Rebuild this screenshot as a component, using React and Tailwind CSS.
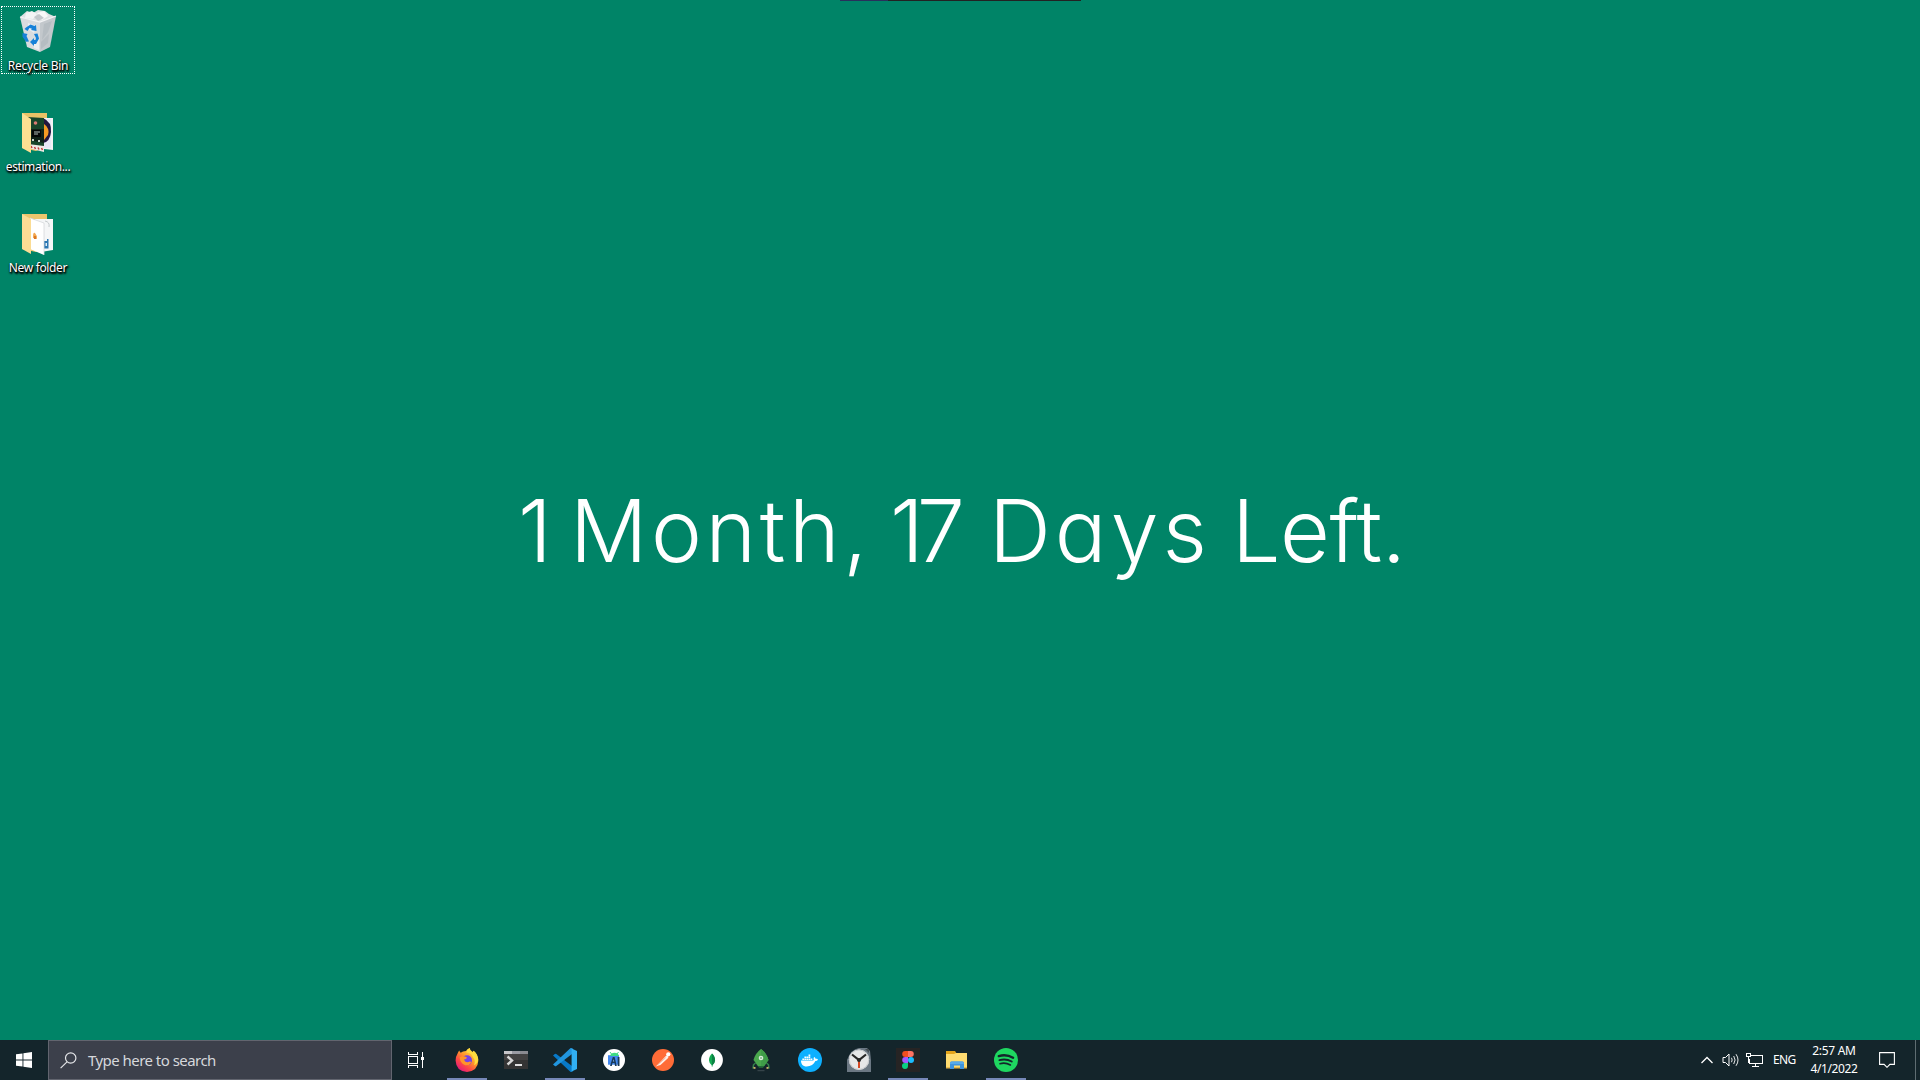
import React from "react";
import { FaDocker } from "react-icons/fa";

function RecycleBin() {
  return (
    <svg viewBox="0 0 48 48" className="mt-px h-12 w-12 shrink-0">
      <path d="M6 9 L13 3 L19 5 L24 2 L31 3 L35 6 L42 9 L24 17Z" fill="#dfe2e4" />
      <path d="M12 5l6-2 5 3-4 5-8-1z" fill="#f3f4f5" />
      <path d="M23 5l7-2 4 5-6 4z" fill="#f8f8f8" />
      <path d="M20 9l5-3 5 4-6 3z" fill="#c3c8cc" />
      <path d="M6 9l20 5 0 30-13-5z" fill="#d9dcdf" />
      <path d="M26 14l16-6-6 31-10 5z" fill="#c3c8cc" />
      <path d="M30 16l8-3-4 11-6 8zM27 34l8-8-1 9-7 6z" fill="#aeb5ba" opacity=".6" />
      <path d="M14 15l8 3-2 7-6-4zM20 35l5-3v10l-5-2z" fill="#eceef0" />
      <path d="M6 9l20 5 16-6" fill="none" stroke="#f2f3f4" strokeWidth="1.2" />
      <g fill="#1681d8">
        <path d="M12 19.500l4.500-3 4 1.500 1.500-1 .5 6-5.500-1 1-1.200-2.500-.8-2 3-3-2z" />
        <path d="M8.500 25l5 1-1 2 2.500 5.500-3 .2-3.500-5z" />
        <path d="M20 26l3.500-.5 1.500 5-3 5.500h-2l0 2-4-4 4-4v2h1.500l.5-2z" />
      </g>
    </svg>
  );
}

function CardsFolder() {
  return (
    <svg viewBox="0 0 48 48" className="mt-px h-12 w-12 shrink-0">
      <path d="M8 4h25v33l-11 5-14-3z" fill="#e9c267" />
      <path d="M20 9h19v32l-17-2z" fill="#f3f3f5" />
      <path d="M27 10h10v29h-10z" fill="#e8e8f6" />
      <path d="M29 9q9 4 8 14t-8 11z" fill="#23163f" />
      <path d="M30 15q6 4 4 11l-4 5z" fill="#f59a23" />
      <path d="M13 8l17 1 0 33-17-5z" fill="#18452a" />
      <path d="M15 20l15 0v14l-15-3z" fill="#102118" />
      <path d="M18 21h9v7h-9z" fill="#050708" />
      <path d="M20 23h6M20 25h4" stroke="#b5bfba" strokeWidth="1" />
      <circle cx="21.500" cy="14" r="1.800" fill="#db7b73" />
      <path d="M18 31h2M24 32h2" stroke="#c7d0c8" strokeWidth="2" />
      <path d="M14 35l16 2v6l-16-4z" fill="#efe9e4" />
      <path d="M17 37l1 2M20.500 38l1 2M24 38.500l1 2M27.500 39l1 2" stroke="#c33939" strokeWidth="1.500" />
      <path d="M8 4l9 6v34l-9-5z" fill="#fbdf92" />
    </svg>
  );
}

function PapersFolder() {
  return (
    <svg viewBox="0 0 48 48" className="mt-px h-12 w-12 shrink-0">
      <path d="M8 4h25v33l-11 5-14-3z" fill="#ecc56d" />
      <path d="M21 9h18v31l-12 2z" fill="#f5f6f7" />
      <path d="M31 11q5 1 4 6" fill="none" stroke="#c5cacc" />
      <path d="M30 31h3v-2h1.500v9.500H30z" fill="#2d78b3" />
      <path d="M31.500 33h1.500v3h-1.500z" fill="#e4eff8" />
      <path d="M16 8l14 5v32l-14-6z" fill="#fff" />
      <path d="M16 8l14 5v32" fill="none" stroke="#d5d8da" strokeWidth=".8" />
      <path d="M19 27q0-5 2-4 2 2 2 6l-4-1z" fill="#f3a64e" />
      <path d="M20 26h2v3h-2z" fill="#d97826" />
      <path d="M8 4l9 5v35l-9-5z" fill="#fbdc94" />
    </svg>
  );
}

const icon = "h-6 w-6";

function Firefox() {
  return (
    <svg viewBox="0 0 24 24" className={icon}>
      <defs>
        <linearGradient id="ff" x1=".85" y1=".1" x2=".2" y2=".95">
          <stop offset="0" stopColor="#ffe14a" />
          <stop offset=".4" stopColor="#ff9a2a" />
          <stop offset=".7" stopColor="#ff4a43" />
          <stop offset="1" stopColor="#e4187d" />
        </linearGradient>
      </defs>
      <path d="M2.600 5.500Q3.200 3.600 4.400 2.500q.2 1.500 1.300 2.300 2-1.800 5.300-1.900Q12.200.9 14.600 0q.5 2.700 3 4.100l1-1.300q4.800 4 4.700 10-.5 10.300-11.300 11.200Q1 23.400.6 12.600.6 8.500 2.600 5.500z" fill="url(#ff)" />
      <path d="M14.600 0q-3.100 1.600-3.200 4.600 4.800 0 6.600 4.600 3 3.500 1 8 3.700-1.800 4.200-5.500Q22.600 6.300 18.600 2.800l-.5 2Q14.900 3.500 14.600 0z" fill="#ffdc3e" />
      <circle cx="12" cy="12.300" r="5" fill="#7542e5" />
      <path d="M4.700 9.300q3.500-2.200 7.300.2-.4 1.800-3 2 .7 3.200 4.400 2.500 2-.9 3 .2-2.300 3.800-6.200 3-5.200-1.800-5.500-7.900z" fill="#ff9429" />
    </svg>
  );
}

function Terminal() {
  return (
    <svg viewBox="0 0 24 24" className={icon}>
      <path d="M0 3h24v18H0z" fill="#424242" />
      <path d="M0 12h24v9H0z" fill="#343434" />
      <path d="M0 3h24v3H0z" fill="#8a8b91" />
      <path d="M0 3h8v3H0z" fill="#c6c6ca" />
      <path d="M8 3h8v3H8z" fill="#9a9ba3" />
      <path d="M3.500 8.500l4.500 4-4.500 4" fill="none" stroke="#d7d7d7" strokeWidth="2.400" />
      <path d="M11 17h7" stroke="#f3f3f3" strokeWidth="1.800" />
    </svg>
  );
}

function VSCode() {
  return (
    <svg viewBox="0 0 24 24" className={icon}>
      <path d="M0 7.600L1.800 6q.8-.4 1.500.1L20 18.800v4.400L17.600 24z" fill="#0879c7" />
      <path d="M0 16.400L1.800 18q.8.400 1.500-.1L20 5.200V.8L17.600 0z" fill="#2196df" />
      <path d="M17.600 0L24 3.100v17.800L17.600 24q1-.4 1-1.500v-21q0-1-1-1.500z" fill="#31aff2" />
    </svg>
  );
}

function AndroidStudio() {
  return (
    <svg viewBox="0 0 24 24" className={icon}>
      <circle cx="12" cy="12" r="11" fill="#fff" />
      <path d="M6 7.200h11v9.500H6z" fill="#4389ef" />
      <path d="M8 8q1-3.200 4.500-3.200T17 8z" fill="#3ddc84" />
      <path d="M8 4l1.500 2M16.500 4L15 6" stroke="#3ddc84" />
      <path d="M8 18l2.800-9h1.800l2.200 9H13l-.5-3h-2l-.7 3zM15.700 9h1.800v9h-1.800z" fill="#183a5b" />
      <path d="M11.600 11.300l-.6 2.200h1.200z" fill="#8cb9f4" />
    </svg>
  );
}

function Postman() {
  return (
    <svg viewBox="0 0 24 24" className={icon}>
      <circle cx="12" cy="12" r="11" fill="#ff6c37" />
      <path d="M4.500 18.700l3.300-3.100 7.500-8q2 .1 2.100 2.200l-7.900 7.300-3.500 1z" fill="#fff0e8" />
      <circle cx="17.300" cy="6.300" r="2.100" fill="#fff" />
      <path d="M7.200 16.400l7.500-6.800" stroke="#e8a184" strokeWidth=".7" />
    </svg>
  );
}

function MongoLeaf() {
  return (
    <svg viewBox="0 0 24 24" className={icon}>
      <circle cx="12" cy="12" r="10.900" fill="#fff" />
      <path d="M12 5.500q3.200 3 3 6.900-.4 3.200-2.700 4.900v1.200h-.6v-1.200Q9.300 15.600 9 12.400q-.1-4 3-6.900z" fill="#13aa52" />
      <path d="M12 5.500v13h.4v-1.200q2.300-1.700 2.700-4.900.1-3.900-3.100-6.900z" fill="#0d8345" />
    </svg>
  );
}

function Rocket() {
  return (
    <svg viewBox="0 0 24 24" className={icon}>
      <path d="M6.500 15l-2 1.800-.4 3 2 .3M17.500 15l2 1.800.4 3-2 .3" fill="none" stroke="#34834a" strokeWidth="1.500" />
      <path d="M4.500 19.500l2 .8M19.500 19.500l-2 .8" stroke="#d7b26a" strokeWidth="1.600" />
      <path d="M12 1q5.600 4 7.500 11L15 18.300H9L4.500 12Q6.400 5 12 1z" fill="#4aa84d" />
      <path d="M12 1q5.600 4 7.500 11L15 18.300h-3z" fill="#3f9d48" />
      <circle cx="12" cy="10" r="2.300" fill="#d8eadb" />
      <circle cx="12" cy="10" r="1.100" fill="#85b78d" />
      <path d="M9 18.300h6l-1 1.500h-4z" fill="#25723a" />
      <path d="M8.500 22.700h7" stroke="#3e4b50" strokeWidth="1" />
    </svg>
  );
}

function Docker() {
  return (
    <span className="flex h-6 w-6 items-center justify-center rounded-full bg-[#0db0ff]">
      <FaDocker className="h-[17px] w-[17px] text-white" />
    </span>
  );
}

function Clock() {
  return (
    <svg viewBox="0 0 24 24" className={icon}>
      <path d="M0 12Q4 1 12 0h8l3 3 1 9v12H0z" fill="#6b7883" />
      <path d="M0 0h5Q1 4 0 9z" fill="#14252b" />
      <path d="M18 1h4v4z" fill="#444d52" />
      <circle cx="12" cy="11.700" r="10.200" fill="#e6e7e8" />
      <circle cx="12" cy="11.700" r="9.700" fill="none" stroke="#c8cbce" strokeWidth="1" />
      <path d="M5 6.500l7 5.500 7-5.500" fill="none" stroke="#262626" strokeWidth="2.200" />
      <path d="M12 12v8" stroke="#d44824" strokeWidth="2" />
      <circle cx="12" cy="12" r="2" fill="#262626" />
    </svg>
  );
}

function Figma() {
  return (
    <svg viewBox="0 0 24 24" className={icon}>
      <path d="M0 0h24v24H0z" fill="#262424" />
      <path d="M12 3H9.200a3 3 0 000 6H12z" fill="#f24e1e" />
      <path d="M12 3h2.800a3 3 0 010 6H12z" fill="#ff7262" />
      <path d="M12 9H9.200a3 3 0 000 6H12z" fill="#a259ff" />
      <circle cx="15" cy="12" r="3" fill="#1abcfe" />
      <path d="M12 15H9.200a3 3 0 102.800 3z" fill="#0acf83" />
    </svg>
  );
}

function Explorer() {
  return (
    <svg viewBox="0 0 24 24" className={icon}>
      <path d="M1 3h9l2 3H1z" fill="#e5a51b" />
      <path d="M1 20V6h8l2-1h11v15z" fill="#ffdc70" />
      <path d="M1 19h21v1.500H1z" fill="#e8b84b" />
      <path d="M5 21v-6q0-1.500 1.500-1.500h11Q19 13.500 19 15v6h-4v-3.500H9V21z" fill="#3f94dc" />
      <path d="M5 15q0-1.500 1.500-1.500h11Q19 13.500 19 15v1H5z" fill="#57aaea" />
    </svg>
  );
}

function Spotify() {
  return (
    <svg viewBox="0 0 24 24" className={icon}>
      <circle cx="12" cy="12" r="12" fill="#1ed760" />
      <g fill="none" stroke="#14252b" strokeLinecap="round">
        <path d="M4.800 8.100q7.500-2.200 14.300 1.600" strokeWidth="2.400" />
        <path d="M5.500 12.100q6.500-1.900 12.200 1.400" strokeWidth="2" />
        <path d="M6 15.700q5.500-1.500 10.400 1.300" strokeWidth="1.600" />
      </g>
    </svg>
  );
}

const apps = [
  { name: "firefox", Icon: Firefox, open: true },
  { name: "terminal", Icon: Terminal },
  { name: "vscode", Icon: VSCode, open: true },
  { name: "android", Icon: AndroidStudio },
  { name: "postman", Icon: Postman },
  { name: "compass", Icon: MongoLeaf },
  { name: "robo", Icon: Rocket },
  { name: "docker", Icon: Docker },
  { name: "clock", Icon: Clock },
  { name: "figma", Icon: Figma, open: true },
  { name: "explorer", Icon: Explorer },
  { name: "spotify", Icon: Spotify, open: true },
];

function DesktopItem({ Icon, label, selected, text }) {
  return (
    <div className={"flex h-[68px] w-[74px] flex-col items-center border " + (selected ? "border-dotted border-white" : "border-transparent")}>
      <Icon />
      <span className={"mt-[2px] whitespace-nowrap text-[12px] leading-4 text-white [text-shadow:1px_1px_2px_#000,0_1px_2px_#000,1px_2px_2px_#000] " + text}>{label}</span>
    </div>
  );
}

export default function App() {
  return (
    <div className="flex h-[1080px] w-[1920px] flex-col overflow-hidden bg-[#008467] font-['Noto_Sans',sans-serif]">
      <div className="flex h-px w-full shrink-0 pl-[840px]">
        <div className="w-12 bg-[#28305c]" />
        <div className="w-[193px] bg-[#222222]" />
      </div>
      <main className="flex min-h-0 flex-1">
        <div className="flex w-[76px] shrink-0 flex-col gap-[33px] pl-px pt-[5px]">
          <DesktopItem Icon={RecycleBin} label="Recycle Bin" selected text="tracking-[-0.25px]" />
          <DesktopItem Icon={CardsFolder} label="estimation..." text="tracking-[-0.4px]" />
          <DesktopItem Icon={PapersFolder} label="New folder" text="tracking-[-0.35px]" />
        </div>
        <h1 className="mt-[476px] flex h-[108px] whitespace-nowrap pl-[442px] font-['Inter',sans-serif] text-[86px] font-light leading-[108px] text-white [font-feature-settings:'cv11']">
          <span className="w-[52px]">1</span>
          <span className="w-[320px] tracking-[3.6px]">Month,</span>
          <span className="w-[99px] tracking-[-7px]">17</span>
          <span className="w-[243px] tracking-[4px]">Days</span>
          <span className="tracking-[-0.5px]">Left.</span>
        </h1>
      </main>
      <footer className="flex h-10 shrink-0 items-stretch bg-[#14252b] text-white">
        <div className="flex w-12 items-center justify-center">
          <svg viewBox="0 0 16 16" className="h-4 w-4" fill="#fff">
            <path d="M0 2.300L6.500 1.400v6.100H0zM7.400 1.200L16 0v7.500H7.400zM0 8.500h6.500v6.100L0 13.700zM7.400 8.500H16V16l-8.600-1.200z" />
          </svg>
        </div>
        <div className="flex w-[344px] items-center border border-[#62656f] bg-[#3c404b] pl-[11px]">
          <svg viewBox="0 0 17 17" className="h-[17px] w-[17px]" fill="none" stroke="#e4e5e8" strokeWidth="1.200">
            <circle cx="10.700" cy="6" r="5.200" />
            <path d="M7 9.800L.6 16.200" />
          </svg>
          <span className="ml-[11px] whitespace-nowrap text-[15px] leading-5 tracking-[-0.54px] text-[#d6d8dc]">Type here to search</span>
        </div>
        <div className="flex w-[50px] items-center pl-[15px]">
          <svg viewBox="0 0 18 16" className="h-4 w-[18px]" fill="none" stroke="#fff" shapeRendering="crispEdges">
            <path d="M1.500 0v2.500h9V0M1.500 16v-2.500h9V16M1.500 4.500h9v7h-9z" />
            <path d="M15.500 0v16" />
            <path d="M14 5h3v3h-3z" fill="#fff" stroke="none" />
          </svg>
        </div>
        {apps.map(({ name, Icon, open }) => (
          <div key={name} className="flex w-[49px] flex-col items-center pt-2">
            <Icon />
            {open && <div className="mt-1.5 h-0.5 w-10 bg-[#7688b8]" />}
          </div>
        ))}
        <div className="ml-auto flex items-center">
          <svg viewBox="0 0 14 8" className="h-2 w-3.5" fill="none" stroke="#fff" strokeWidth="1.300">
            <path d="M1.500 7L7 1.500 12.500 7" />
          </svg>
          <svg viewBox="0 0 18 16" className="ml-[8px] h-4 w-[18px]" fill="none" stroke="#fff">
            <path d="M1 5.500h2.500L7 2v12l-3.500-3.500H1z" />
            <path d="M9.500 5.800q1.300 2.200 0 4.400M11.700 4q2.800 4 0 8M14 2.200q4 5.800 0 11.600" strokeWidth=".9" />
          </svg>
          <svg viewBox="0 0 17 14" className="ml-[6px] h-3.5 w-[17px]" fill="none" stroke="#fff" shapeRendering="crispEdges">
            <path d="M5 2.500h11.500v8H3.500V6M9.500 11v2.500M5.500 13.500h7M.5.500h4v3h-4zM2.500 4v6" />
          </svg>
          <span className="ml-[10px] w-[24px] whitespace-nowrap text-[12px] leading-4 tracking-[-0.6px]">ENG</span>
          <div className="ml-[12px] flex w-[50px] flex-col items-center whitespace-nowrap text-[12px] leading-[18px]">
            <span className="tracking-[-0.3px]">2:57 AM</span>
            <span className="tracking-[-0.4px]">4/1/2022</span>
          </div>
          <svg viewBox="0 0 16 16" className="ml-[20px] h-4 w-4" fill="none" stroke="#fff" strokeWidth="1.100">
            <path d="M.6.600h14.800v11.800h-4.500L8 15.300l-2.900-2.900H.6z" />
          </svg>
          <div className="ml-5 h-10 w-px bg-[#5f6d72]" />
          <div className="w-1" />
        </div>
      </footer>
    </div>
  );
}
